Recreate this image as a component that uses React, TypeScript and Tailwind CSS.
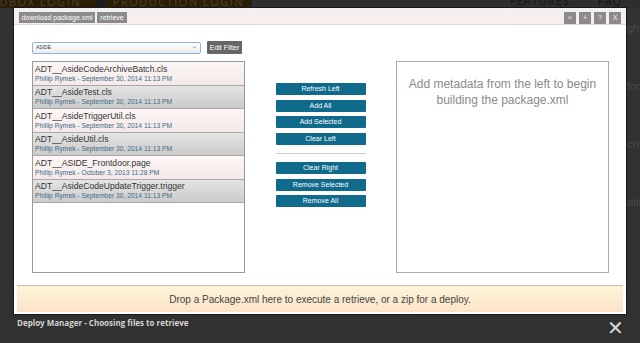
import { ChevronDown } from "lucide-react";

const files = [
  { name: "ADT__AsideCodeArchiveBatch.cls", meta: "Phillip Rymek - September 30, 2014 11:13 PM" },
  { name: "ADT__AsideTest.cls", meta: "Phillip Rymek - September 30, 2014 11:13 PM" },
  { name: "ADT__AsideTriggerUtil.cls", meta: "Phillip Rymek - September 30, 2014 11:13 PM" },
  { name: "ADT__AsideUtil.cls", meta: "Phillip Rymek - September 30, 2014 11:13 PM" },
  { name: "ADT__ASIDE_Frontdoor.page", meta: "Phillip Rymek - October 3, 2013 11:28 PM" },
  { name: "ADT__AsideCodeUpdateTrigger.trigger", meta: "Phillip Rymek - September 30, 2014 11:13 PM" },
];

const leftActions = ["Refresh Left", "Add All", "Add Selected", "Clear Left"];
const rightActions = ["Clear Right", "Remove Selected", "Remove All"];

function ActionButton({ label }: { label: string }) {
  return (
    <button className="h-[12px] w-[90px] rounded-[1px] bg-[#0f6a8b] text-[7px] leading-[12px] text-white">
      {label}
    </button>
  );
}

export default function App() {
  return (
    <div className="relative flex h-[343px] w-[640px] flex-col overflow-hidden bg-[#313131] font-['Liberation_Sans',Arial,sans-serif]">
      {/* page behind the overlay */}
      <div className="flex h-[8px] shrink-0 overflow-hidden bg-[#2e2e2e] font-['Open_Sans',sans-serif] text-[11px] uppercase tracking-[1.5px] text-[#4d4126]">
        <div className="flex h-full w-[97px] shrink-0 justify-end overflow-hidden bg-[#2a1e07] pr-[16px]">
          <span className="-mt-[5px] whitespace-nowrap leading-[14px]">andbox login</span>
        </div>
        <div className="h-full w-[8px] shrink-0 bg-[#1d1d1d]" />
        <div className="flex h-full w-[147px] shrink-0 justify-center overflow-hidden bg-[#2a1e07]">
          <span className="-mt-[5px] whitespace-nowrap leading-[14px]">production login</span>
        </div>
        <div className="ml-auto flex gap-[28px] pr-[18px] text-[11px] tracking-[1px] text-[#151515]">
          <span className="-mt-[6px] leading-[14px]">features</span>
          <span className="-mt-[6px] leading-[14px]">faq</span>
        </div>
      </div>

      <div className="flex">
        <div className="ml-[14px] flex h-[306px] w-[612px] shrink-0 flex-col bg-white shadow-[0_0_0_1px_#1a1a1a]">
          {/* toolbar */}
          <div className="flex h-[17px] items-start justify-between border-b border-[#ead6d2] bg-gradient-to-b from-[#f1f0f0] to-[#f8eeec] px-[5px] pt-[4px]">
            <div className="flex gap-[2px]">
              <button className="h-[11px] w-[76px] bg-[#8b8b8b] text-[7px] leading-[11px] text-white">download package.xml</button>
              <button className="h-[11px] w-[30px] bg-[#8b8b8b] text-[7px] leading-[11px] text-white">retrieve</button>
            </div>
            <div className="flex gap-[3px]">
              {["<", "+", "?", "X"].map((s) => (
                <button key={s} className="h-[12px] w-[12px] bg-[#8b8b8b] text-[7px] leading-[12px] text-[#eee]">
                  {s}
                </button>
              ))}
            </div>
          </div>

          {/* filter row */}
          <div className="flex items-center gap-[6px] pl-[18px] pt-[16px]">
            <div className="flex h-[12px] w-[169px] items-center justify-between rounded-[2px] border border-[#8fb3e6] bg-gradient-to-b from-white to-[#ececec] px-[3px] text-[5px] text-[#333]">
              <span>ASIDE</span>
              <ChevronDown className="h-[5px] w-[5px] text-[#666]" strokeWidth={3} />
            </div>
            <button className="h-[13px] w-[35px] rounded-[1px] bg-[#666] text-[7px] leading-[13px] text-white">Edit Filter</button>
          </div>

          {/* three columns */}
          <div className="flex pl-[18px] pt-[7px]">
            <div className="flex h-[212px] w-[213px] flex-col border border-[#999] bg-white">
              {files.map((f, i) => (
                <div
                  key={f.name}
                  className={
                    "flex h-[23.5px] flex-col justify-center border-b border-[#a8a8a8] px-[2px] " +
                    (i % 2 === 0
                      ? "bg-gradient-to-b from-[#fdf7f6] to-[#f3e9e8]"
                      : "bg-gradient-to-b from-[#e4e4e4] to-[#cbcbcb]")
                  }
                >
                  <div className="whitespace-nowrap text-[8.6px] leading-[11px] text-[#333]">{f.name}</div>
                  <div className="whitespace-nowrap text-[6.7px] leading-[8px] text-[#3d6a86]">{f.meta}</div>
                </div>
              ))}
            </div>

            <div className="flex w-[151px] flex-col items-center pt-[22px]">
              <div className="flex flex-col gap-[4.5px]">
                {leftActions.map((a) => (
                  <ActionButton key={a} label={a} />
                ))}
              </div>
              <div className="mb-[8.5px] mt-[8px] h-px w-[90px] bg-[#ccc]" />
              <div className="flex flex-col gap-[4.5px]">
                {rightActions.map((a) => (
                  <ActionButton key={a} label={a} />
                ))}
              </div>
            </div>

            <div className="h-[212px] w-[213px] border border-[#aaa] bg-white px-[6px] pt-[14px] text-center text-[12px] leading-[16px] text-[#8a8a8a]">
              Add metadata from the left to begin building the package.xml
            </div>
          </div>

          {/* drop zone */}
          <div className="mx-[3px] mb-[2px] mt-auto flex h-[27px] items-center justify-center border-t border-[#bdbdbd] bg-gradient-to-b from-[#fdf5d8] to-[#fde3c8] text-[10px] text-[#444]">
            Drop a Package.xml here to execute a retrieve, or a zip for a deploy.
          </div>
        </div>

        {/* right edge of page behind */}
        <div className="flex flex-col gap-[46px] pl-[1px] pt-[14px] text-[11px] leading-[12px] text-[#4a4a4a]">
          <span>ght</span>
          <span>forg</span>
          <span>crea</span>
          <span>atin</span>
        </div>
      </div>

      {/* caption */}
      <div className="flex items-start justify-between pl-[17px] pr-[16px] pt-[4px]">
        <span className="font-['Open_Sans',sans-serif] text-[8px] font-bold leading-[10px] text-[#d4d4d4]">
          Deploy Manager - Choosing files to retrieve
        </span>
        <span className="text-[20px] leading-[20px] text-[#d8d8d8]">✕</span>
      </div>
    </div>
  );
}
